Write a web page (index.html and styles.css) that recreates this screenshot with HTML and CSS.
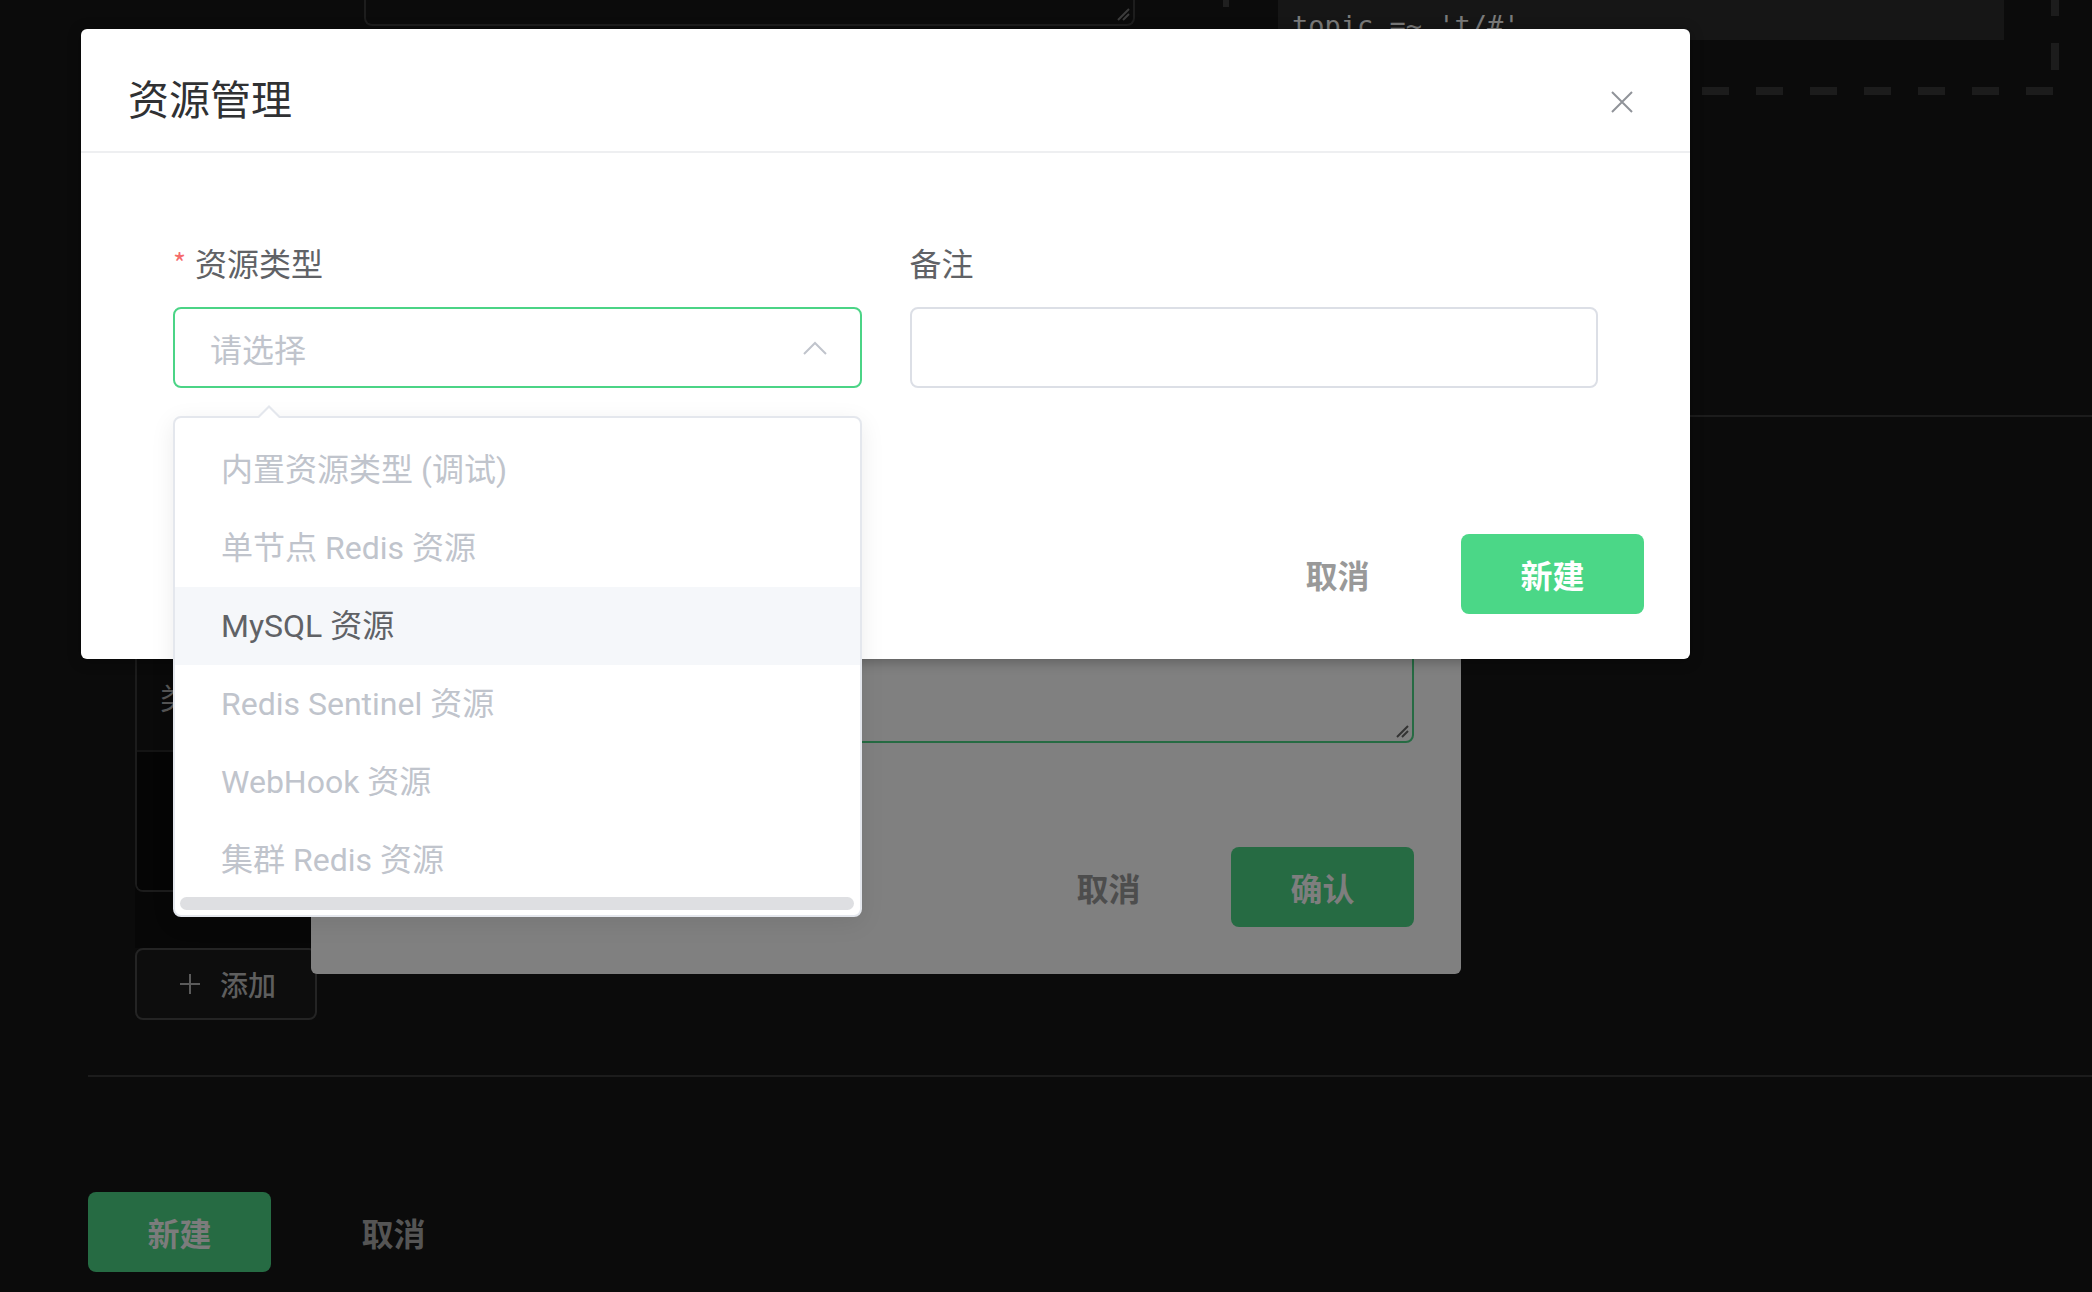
FILE: index.html
```html
<!DOCTYPE html>
<html lang="zh-CN">

<head>
    <meta charset="utf-8">
    <title>资源管理</title>
    <link rel="stylesheet" href="styles.css">
</head>

<body>
    <div class="page">
        <div class="page-head">
            <div class="old-textarea">
                <svg class="resize" width="14" height="14" viewBox="0 0 14 14"><path d="M2 13 L13 2 M7 13 L13 7" stroke="#3c3c3c" stroke-width="2" /></svg>
            </div>
            <div class="thumb-stub"></div>
            <div class="canvas">
                <div class="code-line">topic =~ 't/#'</div>
            </div>
        </div>

        <div class="split-line"></div>

        <div class="rules">
            <div class="rules-table">
                <div class="rules-row rules-head">类型</div>
                <div class="rules-row"></div>
            </div>
        </div>

        <button class="add-btn">
            <svg width="20" height="20" viewBox="0 0 20 20"><path d="M10 0 V20 M0 10 H20" stroke="#5a5a5a" stroke-width="2" /></svg>
            添加
        </button>

        <hr class="page-line">

        <div class="actions">
            <button class="btn btn-primary dim">新建</button>
            <button class="btn btn-text dim">取消</button>
        </div>
    </div>

    <div class="sub-dialog">
        <div class="sub-textarea">
            <svg class="resize" width="14" height="14" viewBox="0 0 14 14"><path d="M2 13 L13 2 M7 13 L13 7" stroke="#333" stroke-width="2" /></svg>
        </div>
        <div class="actions sub-actions">
            <button class="btn btn-text sub-cancel">取消</button>
            <button class="btn btn-primary sub-confirm">确认</button>
        </div>
    </div>

    <div class="dialog">
        <div class="dialog-header">
            <h2 class="dialog-title">资源管理</h2>
            <svg class="dialog-close" width="22" height="22" viewBox="0 0 22 22"><path d="M1 1 L21 21 M21 1 L1 21" stroke="#909399" stroke-width="2" /></svg>
        </div>

        <div class="dialog-body">
            <div class="form-item">
                <div class="form-label"><span class="required">*</span>资源类型</div>
                <div class="select-wrap">
                    <div class="select">
                        <span class="placeholder">请选择</span>
                        <svg width="24" height="14" viewBox="0 0 24 14"><path d="M1 13 L12 2 L23 13" fill="none" stroke="#c0c4cc" stroke-width="2" /></svg>
                    </div>
                    <div class="dropdown">
                        <div class="option">内置资源类型 (调试)</div>
                        <div class="option">单节点 Redis 资源</div>
                        <div class="option option-hover">MySQL 资源</div>
                        <div class="option">Redis Sentinel 资源</div>
                        <div class="option">WebHook 资源</div>
                        <div class="option">集群 Redis 资源</div>
                        <div class="scrollbar"></div>
                    </div>
                </div>
            </div>
            <div class="form-item">
                <div class="form-label">备注</div>
                <div class="input"></div>
            </div>
        </div>

        <div class="actions dialog-footer">
            <button class="btn btn-text">取消</button>
            <button class="btn btn-primary">新建</button>
        </div>
    </div>
</body>

</html>
```

FILE: styles.css
```css
* {
    box-sizing: border-box;
}

html,
body {
    margin: 0;
    height: 100%;
}

body {
    background: #0b0b0b;
    font-family: Roboto, "Noto Sans CJK SC", sans-serif;
    overflow: hidden;
    position: relative;
}

/* dimmed page behind the dialogs */

.page {
    padding-left: 88px;
    height: 1292px;
}

.page-head {
    display: flex;
    align-items: flex-start;
    height: 95px;
}

.page-head > * {
    flex-shrink: 0;
}

.old-textarea {
    position: relative;
    margin-left: 276px;
    width: 771px;
    height: 26px;
    border: 2px solid #1d1d1d;
    border-top: none;
    border-radius: 0 0 8px 8px;
}

.resize {
    position: absolute;
    right: 3px;
    bottom: 3px;
}

.thumb-stub {
    margin-left: 88px;
    width: 6px;
    height: 7px;
    background: #1f1f1f;
}

.canvas {
    margin-left: auto;
    margin-right: 33px;
    width: 819px;
    height: 95px;
    padding: 0 8px 8px 0;
    background:
        repeating-linear-gradient(to left, #1c1c1c 0 27px, transparent 27px 54px) right 6px bottom / 100% 8px no-repeat,
        repeating-linear-gradient(to bottom, #1c1c1c 0 27px, transparent 27px 54px) right 0 top -11px / 8px 100% no-repeat;
}

.code-line {
    margin-left: 38px;
    width: 726px;
    height: 40px;
    padding: 6px 0 0 14px;
    background: #161616;
    color: #7a7a7a;
    font-family: "DejaVu Sans Mono", monospace;
    font-size: 27px;
    line-height: 40px;
    overflow: hidden;
    white-space: pre;
}

.split-line {
    margin: 320px 0 0 1000px;
    height: 2px;
    background: #1c1c1c;
}

.rules {
    margin: 43px 0 0 47px;
    width: 1100px;
    padding-bottom: 56px;
    background: #070707;
}

.rules-table {
    border: 2px solid #1c1c1c;
    border-top: none;
    border-radius: 0 0 8px 8px;
    overflow: hidden;
}

.rules-row {
    height: 138px;
    background: #050505;
}

.rules-head {
    display: flex;
    align-items: flex-end;
    height: 292px;
    padding: 0 0 31px 23px;
    background: #0a0a0a;
    border-bottom: 2px solid #141414;
    color: #555;
    font-size: 30px;
    line-height: 40px;
}

.add-btn {
    display: flex;
    align-items: center;
    justify-content: center;
    gap: 20px;
    margin-left: 47px;
    width: 182px;
    height: 72px;
    padding: 0 0 0 4px;
    background: #0d0d0d;
    border: 2px solid #242424;
    border-radius: 8px;
    color: #5e5e5e;
    font-family: "Noto Sans CJK SC", sans-serif;
    font-size: 28px;
    font-weight: 500;
}

.page-line {
    margin: 55px 0 0;
    border: none;
    border-top: 2px solid #1c1c1c;
}

.page .actions {
    margin-top: 115px;
}

/* buttons */

.actions {
    display: flex;
    gap: 31px;
}

.btn {
    width: 183px;
    height: 80px;
    border: none;
    border-radius: 8px;
    background: transparent;
    font-family: "Noto Sans CJK SC", sans-serif;
    font-size: 32px;
    font-weight: 700;
    cursor: pointer;
}

.btn-primary {
    background: #4bd787;
    color: #fff;
}

.btn-text {
    color: #999;
}

.btn-primary.dim {
    background: #266b43;
    color: #7c7c7c;
}

.btn-text.dim {
    color: #555;
}

/* dialog underneath (dimmed) */

.sub-dialog {
    position: absolute;
    left: 311px;
    top: 200px;
    width: 1150px;
    height: 774px;
    display: flex;
    flex-direction: column;
    justify-content: flex-end;
    align-items: flex-end;
    padding: 0 47px 47px;
    background: #808080;
    border-radius: 6px;
}

.sub-textarea {
    position: relative;
    width: 900px;
    height: 220px;
    border: 2px solid #266b43;
    border-radius: 8px;
}

.sub-actions {
    margin-top: 104px;
}

.sub-cancel {
    color: #4d4d4d;
}

.sub-confirm {
    background: #266b43;
    color: #7e7e7e;
}

/* resource dialog */

.dialog {
    position: absolute;
    left: 81px;
    top: 29px;
    width: 1609px;
    height: 630px;
    background: #fff;
    border-radius: 6px;
    box-shadow: 0 2px 14px rgba(0, 0, 0, 0.3);
}

.dialog-header {
    display: flex;
    justify-content: space-between;
    align-items: flex-start;
    height: 124px;
    padding: 44px 47px 0;
    border-bottom: 2px solid #eeeff1;
}

.dialog-title {
    margin: 0;
    color: #303133;
    font-family: "Noto Sans CJK SC", sans-serif;
    font-size: 41px;
    font-weight: 400;
    line-height: 48px;
}

.dialog-close {
    margin: 18px 10px 0 0;
}

.dialog-body {
    display: grid;
    grid-template-columns: 1fr 1fr;
    column-gap: 48px;
    padding: 89px 92px 0;
}

.form-label {
    display: flex;
    align-items: center;
    height: 40px;
    margin-bottom: 25px;
    color: #606266;
    font-family: "Noto Sans CJK SC", sans-serif;
    font-size: 32px;
    line-height: 40px;
}

.required {
    margin-right: 9px;
    color: #f56c6c;
    font-size: 28px;
}

.select-wrap {
    position: relative;
}

.select {
    display: flex;
    align-items: center;
    justify-content: space-between;
    height: 81px;
    padding: 0 33px 0 35px;
    border: 2px solid #4bd486;
    border-radius: 8px;
}

.placeholder {
    color: #c0c4cc;
    font-family: "Noto Sans CJK SC", sans-serif;
    font-size: 32px;
}

.input {
    height: 81px;
    border: 2px solid #dcdfe6;
    border-radius: 8px;
}

.dropdown {
    position: absolute;
    top: calc(100% + 28px);
    left: 0;
    width: 100%;
    height: 501px;
    padding-top: 13px;
    background: #fff;
    border: 2px solid #e4e7ed;
    border-radius: 8px;
    box-shadow: 0 6px 24px rgba(0, 0, 0, 0.08);
    z-index: 2;
}

.dropdown::before,
.dropdown::after {
    content: '';
    position: absolute;
    left: 82px;
    border: 12px solid transparent;
    border-top: none;
}

.dropdown::before {
    top: -13px;
    border-bottom: 12px solid #e4e7ed;
}

.dropdown::after {
    top: -10px;
    border-bottom: 12px solid #fff;
}

.option {
    height: 78px;
    padding-left: 46px;
    color: #c0c4cc;
    font-size: 32px;
    line-height: 78px;
    white-space: nowrap;
}

.option-hover {
    background: #f5f7fa;
    color: #606266;
}

.scrollbar {
    position: absolute;
    left: 5px;
    right: 6px;
    bottom: 5px;
    height: 13px;
    border-radius: 7px;
    background: #dedfe2;
}

.dialog-footer {
    justify-content: flex-end;
    gap: 32px;
    padding: 146px 46px 0;
}
```
